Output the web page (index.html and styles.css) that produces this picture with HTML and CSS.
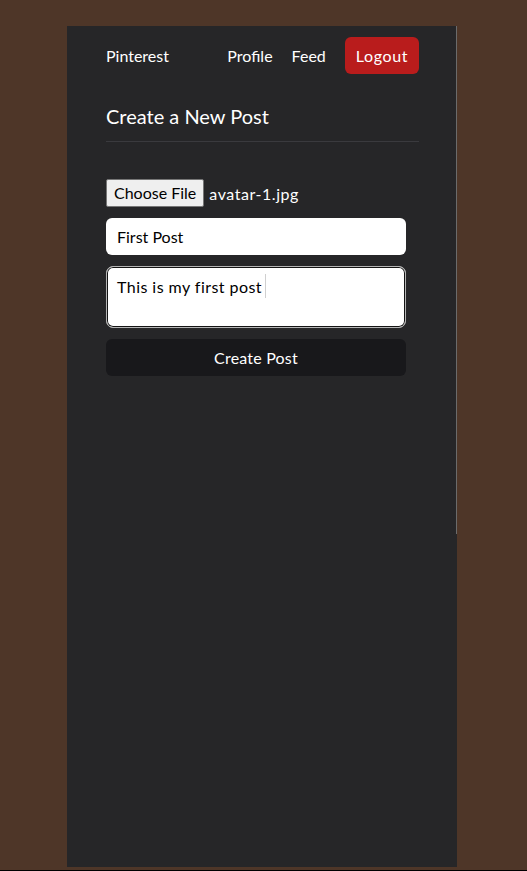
FILE: index.html
```html
<!DOCTYPE html>
<html lang="en">
<head>
<meta charset="utf-8">
<title>Create a New Post</title>
<link rel="stylesheet" href="styles.css">
</head>
<body>
<div class="stage">
  <div class="page">
    <div class="content">
      <nav class="nav">
        <a class="brand" href="#">Pinterest</a>
        <div class="nav-links">
          <a href="#">Profile</a>
          <a href="#">Feed</a>
          <a class="logout" href="#">Logout</a>
        </div>
      </nav>
      <h2 class="title">Create a New Post</h2>
      <form class="form">
        <div class="file-row">
          <span class="file-btn">Choose File</span>
          <span class="file-name">avatar-1.jpg</span>
        </div>
        <input class="field" type="text" value="First Post">
        <div class="area-wrap">
          <textarea class="area">This is my first post</textarea>
          <span class="caret"></span>
        </div>
        <button class="submit" type="button">Create Post</button>
      </form>
    </div>
  </div>
</div>
</body>
</html>
```
FILE: styles.css
```css
* { box-sizing: border-box; }
html, body { margin: 0; padding: 0; }
body {
  background: #4e3628;
  font-family: "Lato", "Open Sans", sans-serif;
  font-size: 16px;
  color: #fff;
}
.stage {
  height: 871px;
  padding: 26px 0 0 67px;
  border-bottom: 1px solid #000;
}
.page {
  width: 390px;
  height: 841px;
  background: #262628;
}
.content {
  height: 508px;
  border-right: 1px solid #6b6b6b;
  padding: 11px 37px 0 39px;
}
.nav {
  display: flex;
  align-items: center;
  justify-content: space-between;
  height: 37px;
}
.nav a { color: #fff; text-decoration: none; line-height: 21px; }
.nav-links { display: flex; align-items: center; gap: 19px; }
.nav-links .logout {
  background: #b91c1c;
  border-radius: 6px;
  padding: 8px 11px;
  display: block;
  letter-spacing: 0.6px;
}
.title {
  margin: 28px 0 0;
  font-size: 20px;
  font-weight: 400;
  line-height: 28px;
  padding-bottom: 11px;
  border-bottom: 1px solid #3a3a3e;
}
.form {
  margin-top: 37px;
  width: 300px;
  display: flex;
  flex-direction: column;
}
.file-row { display: flex; align-items: center; gap: 5px; height: 28px; }
.file-btn {
  background: #efefef;
  color: #000;
  border: 1px solid #767676;
  border-radius: 2px;
  height: 28px;
  line-height: 26px;
  padding: 0 7px;
}
.file-name { letter-spacing: 0.55px; }
.field {
  margin-top: 11px;
  height: 37px;
  border: 0;
  border-radius: 6px;
  background: #fff;
  padding: 0 11px;
  font: inherit;
  color: #000;
  outline: none;
}
.area-wrap { position: relative; margin-top: 11px; }
.area {
  display: block;
  width: 100%;
  height: 62px;
  resize: none;
  border: 1px solid #b5b5b5;
  box-shadow: inset 0 0 0 1px #141414;
  border-radius: 7px;
  padding: 9px 10px;
  font: inherit;
  letter-spacing: 0.45px;
  line-height: 22px;
  color: #000;
  background: #fff;
  outline: none;
}
.caret {
  position: absolute;
  left: 159px;
  top: 8px;
  width: 1px;
  height: 24px;
  background: #d0d0d0;
}
.submit {
  margin-top: 11px;
  height: 37px;
  border: 0;
  border-radius: 6px;
  background: #18181b;
  color: #fff;
  font: inherit;
  letter-spacing: 0.2px;
}
```
